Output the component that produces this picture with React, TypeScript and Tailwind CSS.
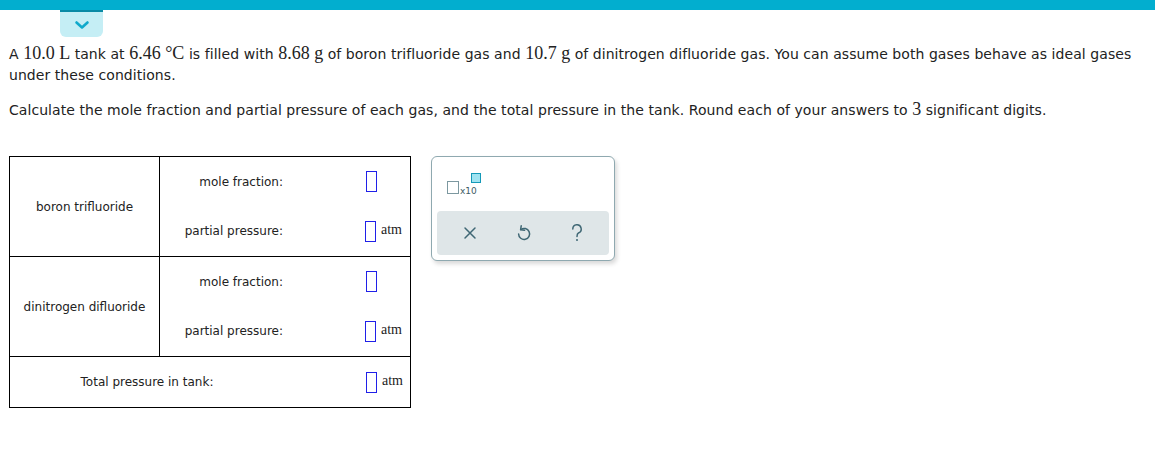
import React from "react";

const sans = { fontFamily: '"DejaVu Sans", Verdana, sans-serif' };
const serif = { fontFamily: '"Liberation Serif", "Times New Roman", serif' };

function M({ children }: { children: React.ReactNode }) {
  return (
    <span style={serif} className="text-[18px] leading-[16px] tracking-normal">
      {children}
    </span>
  );
}

function Box() {
  return <span className="inline-block w-[11px] h-[21px] border border-[#2020e8] bg-white align-middle" />;
}

function Atm() {
  return (
    <span style={serif} className="text-[14px] leading-[16px] text-[#222] ml-[5px] -mt-[3px]">
      atm
    </span>
  );
}

function GasRow({ name }: { name: string }) {
  return (
    <div className="flex h-[100px] border-b border-black">
      <div className="w-[150px] shrink-0 border-r border-black flex items-center justify-center text-[12px] text-[#222]">
        {name}
      </div>
      <div className="flex-1 flex flex-col">
        <div className="h-[50px] flex items-center">
          <div className="w-[123px] text-right text-[12px] text-[#222]">mole fraction:</div>
          <div className="ml-[83px] flex items-center">
            <Box />
          </div>
        </div>
        <div className="h-[50px] flex items-center">
          <div className="w-[123px] text-right text-[12px] text-[#222]">partial pressure:</div>
          <div className="ml-[82px] flex items-center">
            <Box />
            <Atm />
          </div>
        </div>
      </div>
    </div>
  );
}

export default function App() {
  return (
    <div style={sans} className="w-[1155px] h-[472px] bg-white relative overflow-hidden text-[#222]">
      <div className="h-[10px] bg-[#02aecf]" />
      <div className="ml-[60px] w-[43px] h-[27px] bg-[#c5eef5] rounded-b-[6px] border-t-[2px] border-[#0a8aa5] flex items-center justify-center">
        <svg width="16" height="10" viewBox="0 0 16 10">
          <path d="M2.5 2.5 L8 7.5 L13.5 2.5" fill="none" stroke="#10a9cb" strokeWidth="2.6" strokeLinecap="round" strokeLinejoin="round" />
        </svg>
      </div>
      <div className="px-[9px] pt-[7px] text-[14px] leading-[21px] tracking-[0.06px]">
        <p>
          A <M>10.0 L</M> tank at <M>6.46 °C</M> is filled with <M>8.68 g</M> of boron trifluoride gas and <M>10.7 g</M> of
          dinitrogen difluoride gas. You can assume both gases behave as ideal gases under these conditions.
        </p>
        <p className="mt-[14px]">
          Calculate the mole fraction and partial pressure of each gas, and the total pressure in the tank. Round each of your
          answers to <M>3</M> significant digits.
        </p>
      </div>
      <div className="flex items-start px-[9px] mt-[35px]">
        <div className="w-[402px] border-t border-l border-r border-black">
          <GasRow name="boron trifluoride" />
          <GasRow name="dinitrogen difluoride" />
          <div className="h-[51px] flex items-center border-b border-black">
            <div className="w-[274px] text-center text-[12px] text-[#222]">Total pressure in tank:</div>
            <div className="ml-[82px] flex items-center">
              <Box />
              <Atm />
            </div>
          </div>
        </div>
        <div className="ml-[20px] w-[184px] h-[105px] border border-[#8fa9b0] rounded-[6px] bg-white shadow-[2px_3px_4px_rgba(0,0,0,0.15)] p-[5px] flex flex-col">
          <div className="h-[49px] relative">
            <span className="absolute left-[10px] top-[19px] w-[12px] h-[13px] border-[1.5px] border-[#7c98a0] bg-white" />
            <span className="absolute left-[23px] top-[24px] text-[9px] leading-[10px] text-[#3e5c66]">x10</span>
            <span className="absolute left-[34px] top-[11px] w-[10px] h-[10px] border-[1.5px] border-[#1499b8] bg-[#9fe3f1]" />
          </div>
          <div className="flex-1 bg-[#dfe6e8] rounded-[4px] flex items-center justify-around px-[6px]">
            <svg width="14" height="14" viewBox="0 0 14 14">
              <path d="M2 2 L12 12 M12 2 L2 12" stroke="#3f6774" strokeWidth="1.5" strokeLinecap="round" />
            </svg>
            <svg width="16" height="18" viewBox="0 0 16 18">
              <path d="M4.8 5.5 A5.5 5.5 0 1 1 2.6 10" fill="none" stroke="#3f6774" strokeWidth="1.5" strokeLinecap="round" />
              <path d="M5.2 1.8 L4.6 5.8 L8.6 6.2" fill="none" stroke="#3f6774" strokeWidth="1.5" strokeLinecap="round" strokeLinejoin="round" />
            </svg>
            <svg width="12" height="20" viewBox="0 0 12 20">
              <path d="M1.8 6 A4.2 4.2 0 1 1 7.4 10 C6 10.6 6 11.8 6 13.5" fill="none" stroke="#3f6774" strokeWidth="1.5" strokeLinecap="round" />
              <circle cx="6" cy="17" r="1" fill="#3f6774" />
            </svg>
          </div>
        </div>
      </div>
    </div>
  );
}
